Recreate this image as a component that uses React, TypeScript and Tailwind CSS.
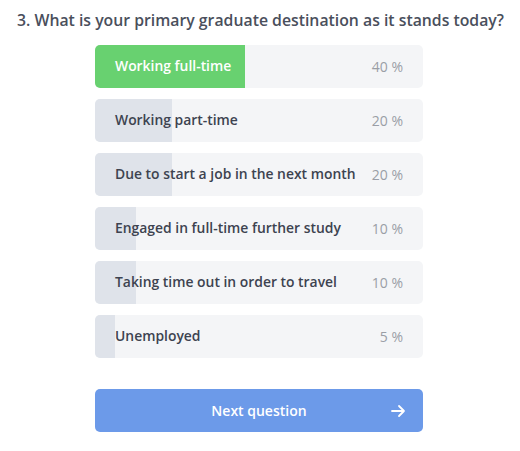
import React from "react";

const rows = [
  { label: "Working full-time", pct: "40 %", w: 150, active: true },
  { label: "Working part-time", pct: "20 %", w: 77 },
  { label: "Due to start a job in the next month", pct: "20 %", w: 77 },
  { label: "Engaged in full-time further study", pct: "10 %", w: 41 },
  { label: "Taking time out in order to travel", pct: "10 %", w: 41 },
  { label: "Unemployed", pct: "5 %", w: 20 },
];

export default function App() {
  return (
    <div
      className="w-[520px] h-[451px] bg-white"
      style={{ fontFamily: '"Open Sans", sans-serif' }}
    >
      <h1 className="pl-[17px] pt-[8px] text-[15.8px] font-semibold text-[#4a4f5c] leading-[24px] whitespace-nowrap">
        3. What is your primary graduate destination as it stands today?
      </h1>
      <div className="ml-[95px] w-[328px] mt-[13px] flex flex-col gap-[11px]">
        {rows.map((r) => (
          <div
            key={r.label}
            className="relative h-[43px] rounded-[5px] bg-[#f4f5f7] overflow-hidden flex items-center justify-between px-[20px]"
          >
            <div
              className={`absolute left-0 top-0 bottom-0 ${r.active ? "bg-[#68d170]" : "bg-[#dfe3ea]"}`}
              style={{ width: r.w }}
            />
            <span
              className={`relative text-[13.9px] font-semibold ${r.active ? "text-white" : "text-[#3d4350]"}`}
            >
              {r.label}
            </span>
            <span className="relative text-[14px] text-[#9a9ea6]">{r.pct}</span>
          </div>
        ))}
      </div>
      <button className="ml-[95px] mt-[31px] w-[328px] h-[43px] rounded-[5px] bg-[#6c9ae9] flex items-center justify-center relative text-white text-[14px] font-semibold">
        Next question
        <svg
          className="absolute right-[17px] top-1/2 -translate-y-1/2"
          width="16"
          height="16"
          viewBox="0 0 16 16"
          fill="none"
          stroke="white"
          strokeWidth="1.8"
          strokeLinecap="round"
          strokeLinejoin="round"
        >
          <path d="M2 8h12M9 3l5 5-5 5" />
        </svg>
      </button>
    </div>
  );
}
